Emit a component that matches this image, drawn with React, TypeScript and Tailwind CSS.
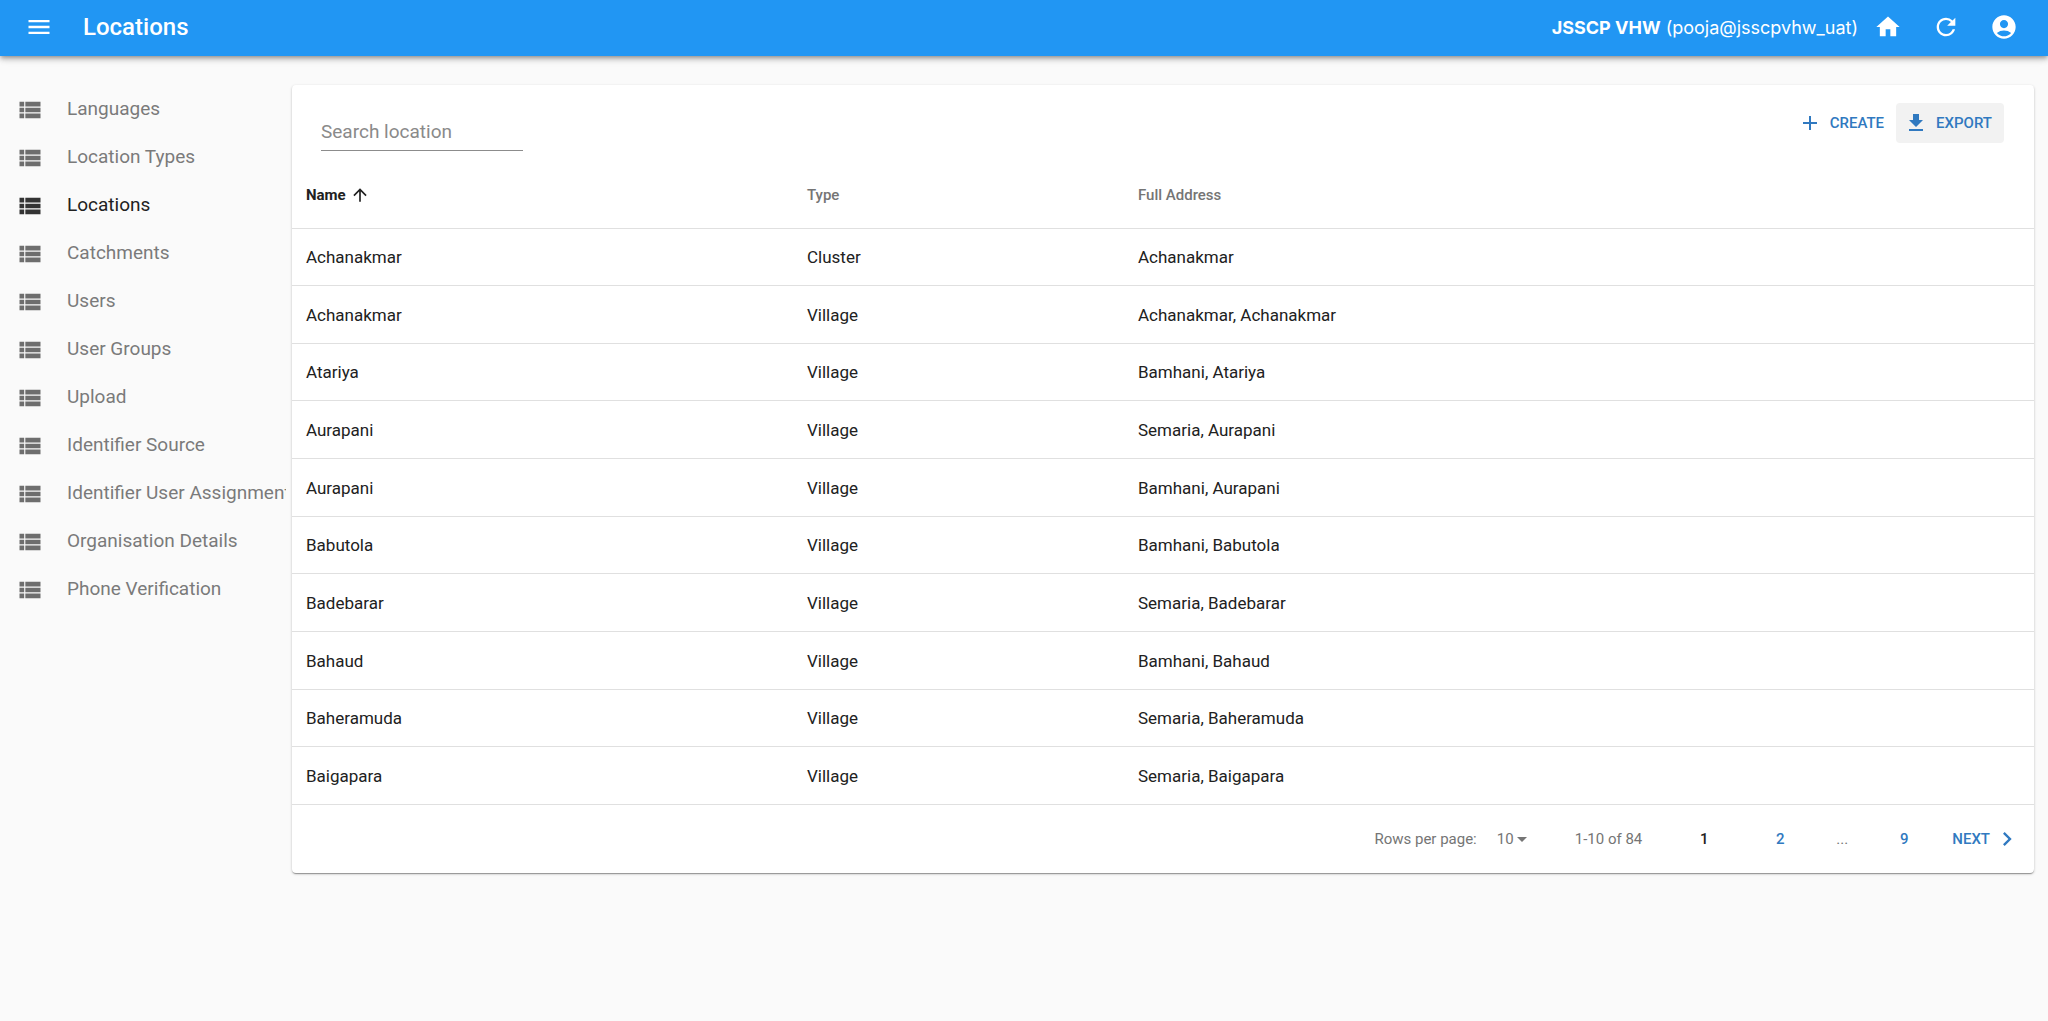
import { useState } from 'react';
import { MdAccountCircle, MdAdd, MdArrowDropDown, MdArrowUpward, MdChevronRight, MdGetApp, MdHome, MdMenu, MdRefresh, MdViewList } from 'react-icons/md';

const menuItems = [
  'Languages',
  'Location Types',
  'Locations',
  'Catchments',
  'Users',
  'User Groups',
  'Upload',
  'Identifier Source',
  'Identifier User Assignment',
  'Organisation Details',
  'Phone Verification',
];

const locations = [
  { name: 'Achanakmar', type: 'Cluster', address: 'Achanakmar' },
  { name: 'Achanakmar', type: 'Village', address: 'Achanakmar, Achanakmar' },
  { name: 'Atariya', type: 'Village', address: 'Bamhani, Atariya' },
  { name: 'Aurapani', type: 'Village', address: 'Semaria, Aurapani' },
  { name: 'Aurapani', type: 'Village', address: 'Bamhani, Aurapani' },
  { name: 'Babutola', type: 'Village', address: 'Bamhani, Babutola' },
  { name: 'Badebarar', type: 'Village', address: 'Semaria, Badebarar' },
  { name: 'Bahaud', type: 'Village', address: 'Bamhani, Bahaud' },
  { name: 'Baheramuda', type: 'Village', address: 'Semaria, Baheramuda' },
  { name: 'Baigapara', type: 'Village', address: 'Semaria, Baigapara' },
];

function Header() {
  return (
    <header className="relative flex h-14 items-center bg-[#2196f3] pb-0.5 pl-[25px] pr-[30px] text-white shadow-[0_2px_4px_-1px_rgba(0,0,0,0.3),0_4px_5px_rgba(0,0,0,0.14),0_1px_10px_rgba(0,0,0,0.12)]">
      <button aria-label="Toggle menu" className="cursor-pointer">
        <MdMenu className="size-7" />
      </button>
      <h1 className="ml-[30px] text-2xl font-medium">Locations</h1>
      <p className="ml-auto pt-0.5 font-[Inter,sans-serif] text-lg">
        <b className="font-bold">JSSCP VHW</b> (pooja@jsscpvhw_uat)
      </p>
      <nav className="ml-4 flex gap-[30px]">
        <a href="#home" aria-label="Home">
          <MdHome className="size-7" />
        </a>
        <button aria-label="Refresh" className="cursor-pointer">
          <MdRefresh className="size-7" />
        </button>
        <button aria-label="Profile" className="cursor-pointer">
          <MdAccountCircle className="size-7" />
        </button>
      </nav>
    </header>
  );
}

function Sidebar() {
  return (
    <nav className="w-[286px] shrink-0 overflow-hidden pt-[29px]">
      {menuItems.map((item) => (
        <a
          key={item}
          href="#menu"
          className={`flex h-12 items-center gap-[23px] whitespace-nowrap pl-4 text-[19px] ${
            item === 'Locations' ? 'text-[#212121]' : 'text-[#7a7a7a]'
          }`}
        >
          <MdViewList className={`mt-0.5 size-7 shrink-0 ${item === 'Locations' ? 'text-[#333333]' : 'text-[#6e6e6e]'}`} />
          {item}
        </a>
      ))}
    </nav>
  );
}

function Toolbar() {
  const [query, setQuery] = useState('');

  return (
    <div className="flex items-start justify-between pb-[9px] pl-[29px] pr-[30px] pt-[18px]">
      <input
        type="search"
        aria-label="Search location"
        placeholder="Search location"
        value={query}
        onChange={(e) => setQuery(e.target.value)}
        className="mt-3 h-9 w-[202px] border-b border-[#8c8c8c] pb-0.5 text-[19px] outline-none placeholder:text-[#8a8a8a]"
      />
      <div className="flex text-[15px] font-medium text-[#3079c0]">
        <button className="flex h-10 cursor-pointer items-center gap-2 pl-2 pr-3">
          <MdAdd className="size-6" />
          CREATE
        </button>
        <button className="flex h-10 cursor-pointer items-center gap-2 rounded bg-[#f2f2f2] pl-2 pr-3">
          <MdGetApp className="size-6" />
          EXPORT
        </button>
      </div>
    </div>
  );
}

function LocationTable() {
  return (
    <table className="h-[645px] w-full table-fixed text-left text-[17px] text-[#212121]">
      <thead>
        <tr className="h-[68px] border-b border-[#e0e0e0] text-[15px] text-[#757575]">
          <th className="w-[501px] pl-[14px] pt-0.5 font-bold text-[#212121]">
            <button className="flex cursor-pointer items-center gap-1">
              Name <MdArrowUpward className="size-5" />
            </button>
          </th>
          <th className="w-[331px] pl-[14px] pt-0.5 font-medium">Type</th>
          <th className="pl-[14px] pt-0.5 font-medium">Full Address</th>
        </tr>
      </thead>
      <tbody>
        {locations.map((location, i) => (
          <tr key={i} className="border-b border-[#e0e0e0]">
            <td className="pl-[14px] pt-0.5">{location.name}</td>
            <td className="pl-[14px] pt-0.5">{location.type}</td>
            <td className="pl-[14px] pt-0.5">{location.address}</td>
          </tr>
        ))}
      </tbody>
    </table>
  );
}

function Pagination() {
  return (
    <div className="flex h-[68px] items-center justify-end pr-[13px] text-[15px] text-[#757575]">
      <label htmlFor="rows">Rows per page:</label>
      <div className="relative ml-5 flex items-center">
        <select id="rows" className="appearance-none pr-4 outline-none">
          <option>10</option>
          <option>25</option>
          <option>50</option>
        </select>
        <MdArrowDropDown className="pointer-events-none absolute right-[-4px] size-6" />
      </div>
      <span className="ml-[45px]">1-10 of 84</span>
      <div className="ml-6 flex items-center font-medium text-[#3079c0]">
        <button className="w-[76px] cursor-pointer text-[#212121]">1</button>
        <button className="w-[76px] cursor-pointer">2</button>
        <span className="w-12 text-center font-normal text-[#757575]">...</span>
        <button className="w-[76px] cursor-pointer">9</button>
        <button className="flex cursor-pointer items-center gap-[3px] pl-2.5">
          NEXT <MdChevronRight className="size-7" />
        </button>
      </div>
    </div>
  );
}

export default function App() {
  return (
    <div className="min-h-screen bg-[#fafafa] font-[Roboto,sans-serif]">
      <Header />
      <div className="flex">
        <Sidebar />
        <main className="min-w-0 flex-1 pl-[6px] pr-[14px] pt-[29px]">
          <div className="rounded bg-white shadow-[0_2px_1px_-1px_rgba(0,0,0,0.2),0_1px_1px_rgba(0,0,0,0.14),0_1px_3px_rgba(0,0,0,0.2)]">
            <Toolbar />
            <LocationTable />
            <Pagination />
          </div>
        </main>
      </div>
    </div>
  );
}
